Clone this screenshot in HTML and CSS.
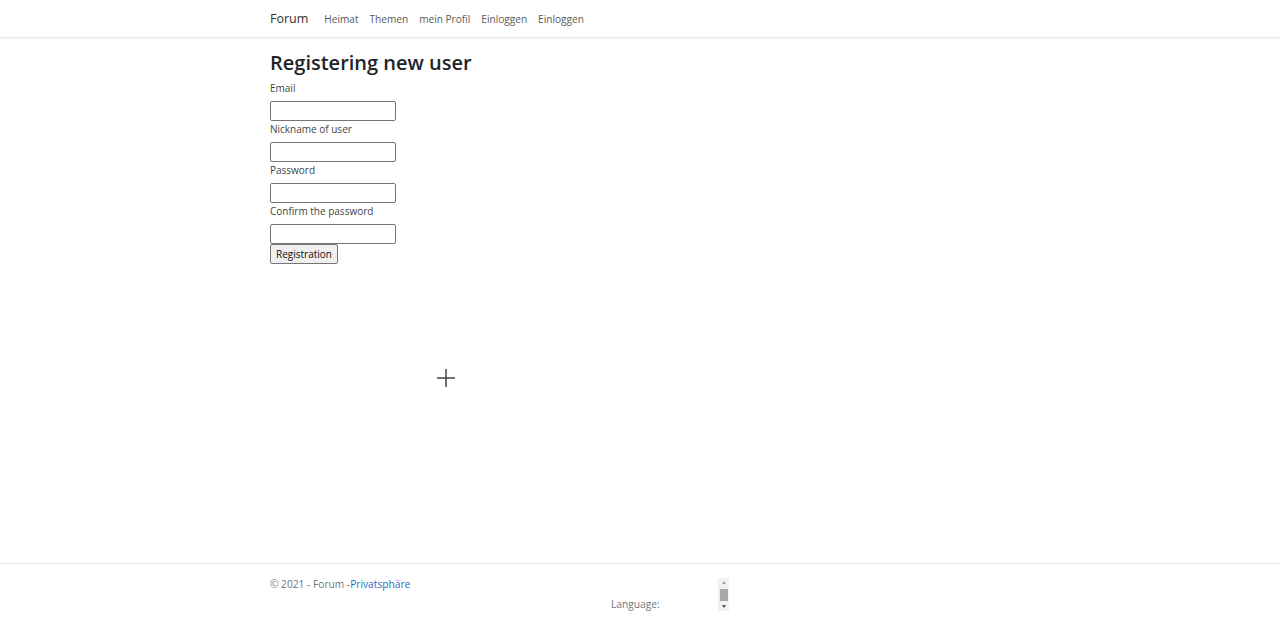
FILE: index.html
```html
<!DOCTYPE html>
<html lang="en">
<head>
<meta charset="utf-8">
<title>Registering new user - Forum</title>
<link rel="stylesheet" href="styles.css">
</head>
<body>
<div class="page">
  <header class="navbar">
    <div class="container nav-inner">
      <a class="brand" href="#">Forum</a>
      <nav class="nav-links">
        <a href="#">Heimat</a>
        <a href="#">Themen</a>
        <a href="#">mein Profil</a>
        <a href="#">Einloggen</a>
        <a href="#">Einloggen</a>
      </nav>
    </div>
  </header>
  <main class="container main">
    <h1 class="title">Registering new user</h1>
    <form class="form">
      <label class="label">Email</label>
      <input class="field" type="text">
      <label class="label">Nickname of user</label>
      <input class="field" type="text">
      <label class="label">Password</label>
      <input class="field" type="password">
      <label class="label">Confirm the password</label>
      <input class="field" type="password">
      <button class="btn" type="button">Registration</button>
    </form>
  </main>
  <footer class="footer">
    <div class="container footer-inner">
      <div class="copy">© 2021 - Forum -<a href="#">Privatsphäre</a></div>
      <div class="lang-row">
        <span class="lang-label">Language:</span>
        <div class="listbox">
          <span class="arrow up"></span>
          <span class="thumb"></span>
          <span class="arrow down"></span>
        </div>
      </div>
    </div>
  </footer>
  <svg class="cursor" width="20" height="20" viewBox="0 0 20 20">
    <path d="M10 1v18M1 10h18" stroke="#fff" stroke-width="3"/>
    <path d="M10 1v18M1 10h18" stroke="#444" stroke-width="1.5"/>
  </svg>
</div>
</body>
</html>
```
FILE: styles.css
```css
* { box-sizing: border-box; }
html, body { margin: 0; padding: 0; }
body {
  font-family: "Open Sans", "Noto Sans", sans-serif;
  color: #212529;
  background: #fff;
  width: 1280px;
  height: 624px;
  overflow: hidden;
}
.page {
  position: relative;
  height: 624px;
  display: flex;
  flex-direction: column;
}
.container {
  width: 1280px;
  padding: 0 270px;
}
.navbar {
  height: 38px;
  border-bottom: 1px solid #e5e5e5;
  box-shadow: 0 1px 3px rgba(0,0,0,.05);
}
.nav-inner {
  display: flex;
  align-items: center;
  height: 37px;
}
.brand {
  font-size: 12.5px;
  color: #333;
  text-decoration: none;
  margin-right: 16px;
}
.nav-links { display: flex; gap: 11px; }
.nav-links a {
  font-size: 10.1px;
  color: #5a5a5a;
  text-decoration: none;
}
.main { flex: 1; padding-top: 11px; }
.title {
  margin: 0 0 4px;
  font-size: 20px;
  font-weight: 600;
  line-height: 28px;
  color: #212529;
}
.form { display: flex; flex-direction: column; align-items: flex-start; }
.label {
  font-size: 10px;
  color: #444;
  line-height: 14px;
  margin-bottom: 6px;
}
.field {
  width: 126px;
  height: 20px;
  border: 1px solid #767676;
  border-radius: 2px;
  margin: 0 0 1px;
  padding: 0;
}
.btn {
  font-family: inherit;
  font-size: 10px;
  color: #111;
  background: #efefef;
  border: 1px solid #767676;
  border-radius: 2px;
  height: 20px;
  padding: 0 5px;
  margin: -1px 0 0;
}
.footer {
  height: 61px;
  border-top: 1px solid #e5e5e5;
}
.footer-inner { padding-top: 13px; }
.copy { font-size: 10.2px; color: #6c757d; line-height: 14px; }
.copy a { color: #1b6ec2; text-decoration: none; }
.lang-row {
  display: flex;
  align-items: flex-start;
  margin-top: -13px;
  padding-left: 341px;
}
.lang-label {
  font-size: 10.2px;
  color: #6c757d;
  margin-top: 19px;
  width: 107px;
}
.listbox {
  width: 11px;
  height: 33px;
  background: #f1f1f1;
  display: flex;
  flex-direction: column;
  align-items: center;
  padding: 3px 0;
}
.arrow { width: 0; height: 0; border-left: 2.5px solid transparent; border-right: 2.5px solid transparent; }
.arrow.up { border-bottom: 3px solid #a3a3a3; }
.arrow.down { border-top: 3px solid #505050; margin-top: auto; }
.thumb { width: 8px; height: 12px; background: #a8a8a8; margin-top: 5px; }
.cursor { position: absolute; left: 436px; top: 368px; }
```
